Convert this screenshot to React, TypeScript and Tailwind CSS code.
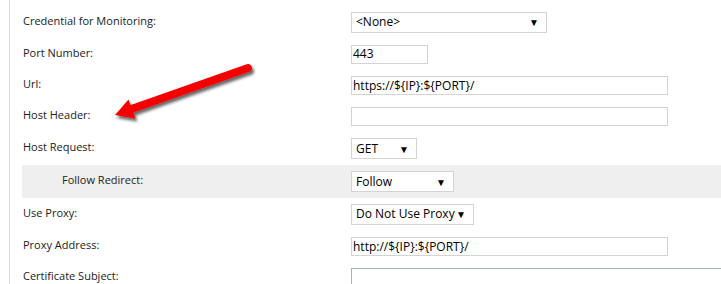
import React from "react"

const Label = ({ children, indent }: { children: React.ReactNode; indent?: boolean }) => (
  <div className={`w-[329px] shrink-0 pb-[2px] text-[11px] text-[#222] ${indent ? "pl-[40px]" : "pl-[1px]"}`}>
    {children}
  </div>
)

const Select = ({ value, width }: { value: string; width: string }) => (
  <div className={`${width} h-[21px] flex items-center justify-between border border-[#d3d3d3] bg-white pl-[4px] pr-[7px] text-[12px] text-black`}>
    <span>{value}</span>
    <span className="text-[10px] leading-none">▼</span>
  </div>
)

const TextBox = ({ value, width }: { value?: string; width: string }) => (
  <div className={`${width} h-[19px] flex items-center border border-[#d3d3d3] bg-white pl-[1px] text-[12px] text-black`}>
    {value}
  </div>
)

const Row = ({ h, shaded, children }: { h: string; shaded?: boolean; children: React.ReactNode }) => (
  <div className={`flex shrink-0 items-center ${h} ${shaded ? "bg-[#efefef]" : ""}`}>{children}</div>
)

const Arrow = () => (
  <svg className="absolute left-[100px] top-[50px]" width="170" height="90" viewBox="0 0 170 90">
    <defs>
      <filter id="shadow" x="-20%" y="-40%" width="140%" height="180%">
        <feDropShadow dx="2" dy="3" stdDeviation="1.6" floodColor="#000" floodOpacity="0.6" />
      </filter>
    </defs>
    <g filter="url(#shadow)">
      <line x1="148" y1="18" x2="30" y2="59.5" stroke="#f40000" strokeWidth="8" strokeLinecap="round" />
      <polygon points="15,65 35.5,68.5 28.5,49.5" fill="#f40000" />
    </g>
  </svg>
)

export default function App() {
  return (
    <div className="relative w-[721px] h-[284px] overflow-hidden bg-white" style={{ fontFamily: '"Open Sans", sans-serif' }}>
      <div className="ml-[9px] h-full flex flex-col border-l border-[#dcdcdc] pl-[12px]">
        <div className="shrink-0 pl-[329px] -mt-[19px] mb-[6px]">
          <TextBox width="w-[72px]" />
        </div>
        <Row h="h-[32px]">
          <Label>Credential for Monitoring:</Label>
          <Select value="<None>" width="w-[196px]" />
        </Row>
        <Row h="h-[32px]">
          <Label>Port Number:</Label>
          <TextBox value="443" width="w-[77px]" />
        </Row>
        <Row h="h-[31px]">
          <Label>Url:</Label>
          <TextBox value="https://${IP}:${PORT}/" width="w-[317px]" />
        </Row>
        <Row h="h-[31px]">
          <Label>Host Header:</Label>
          <TextBox width="w-[317px]" />
        </Row>
        <Row h="h-[33px]">
          <Label>Host Request:</Label>
          <Select value="GET" width="w-[66px]" />
        </Row>
        <Row h="h-[33px]" shaded>
          <Label indent>Follow Redirect:</Label>
          <Select value="Follow" width="w-[103px]" />
        </Row>
        <Row h="h-[32px]">
          <Label>Use Proxy:</Label>
          <Select value="Do Not Use Proxy" width="w-[123px]" />
        </Row>
        <Row h="h-[33px]">
          <Label>Proxy Address:</Label>
          <TextBox value="http://${IP}:${PORT}/" width="w-[317px]" />
        </Row>
        <div className="flex shrink-0 items-start pt-[5px]">
          <div className="w-[329px] shrink-0 pl-[1px] text-[11px] leading-[15px] text-[#222]">Certificate Subject:</div>
          <div className="w-[400px] h-[40px] shrink-0 border border-[#a5b2c3] bg-white" />
        </div>
      </div>
      <Arrow />
    </div>
  )
}
